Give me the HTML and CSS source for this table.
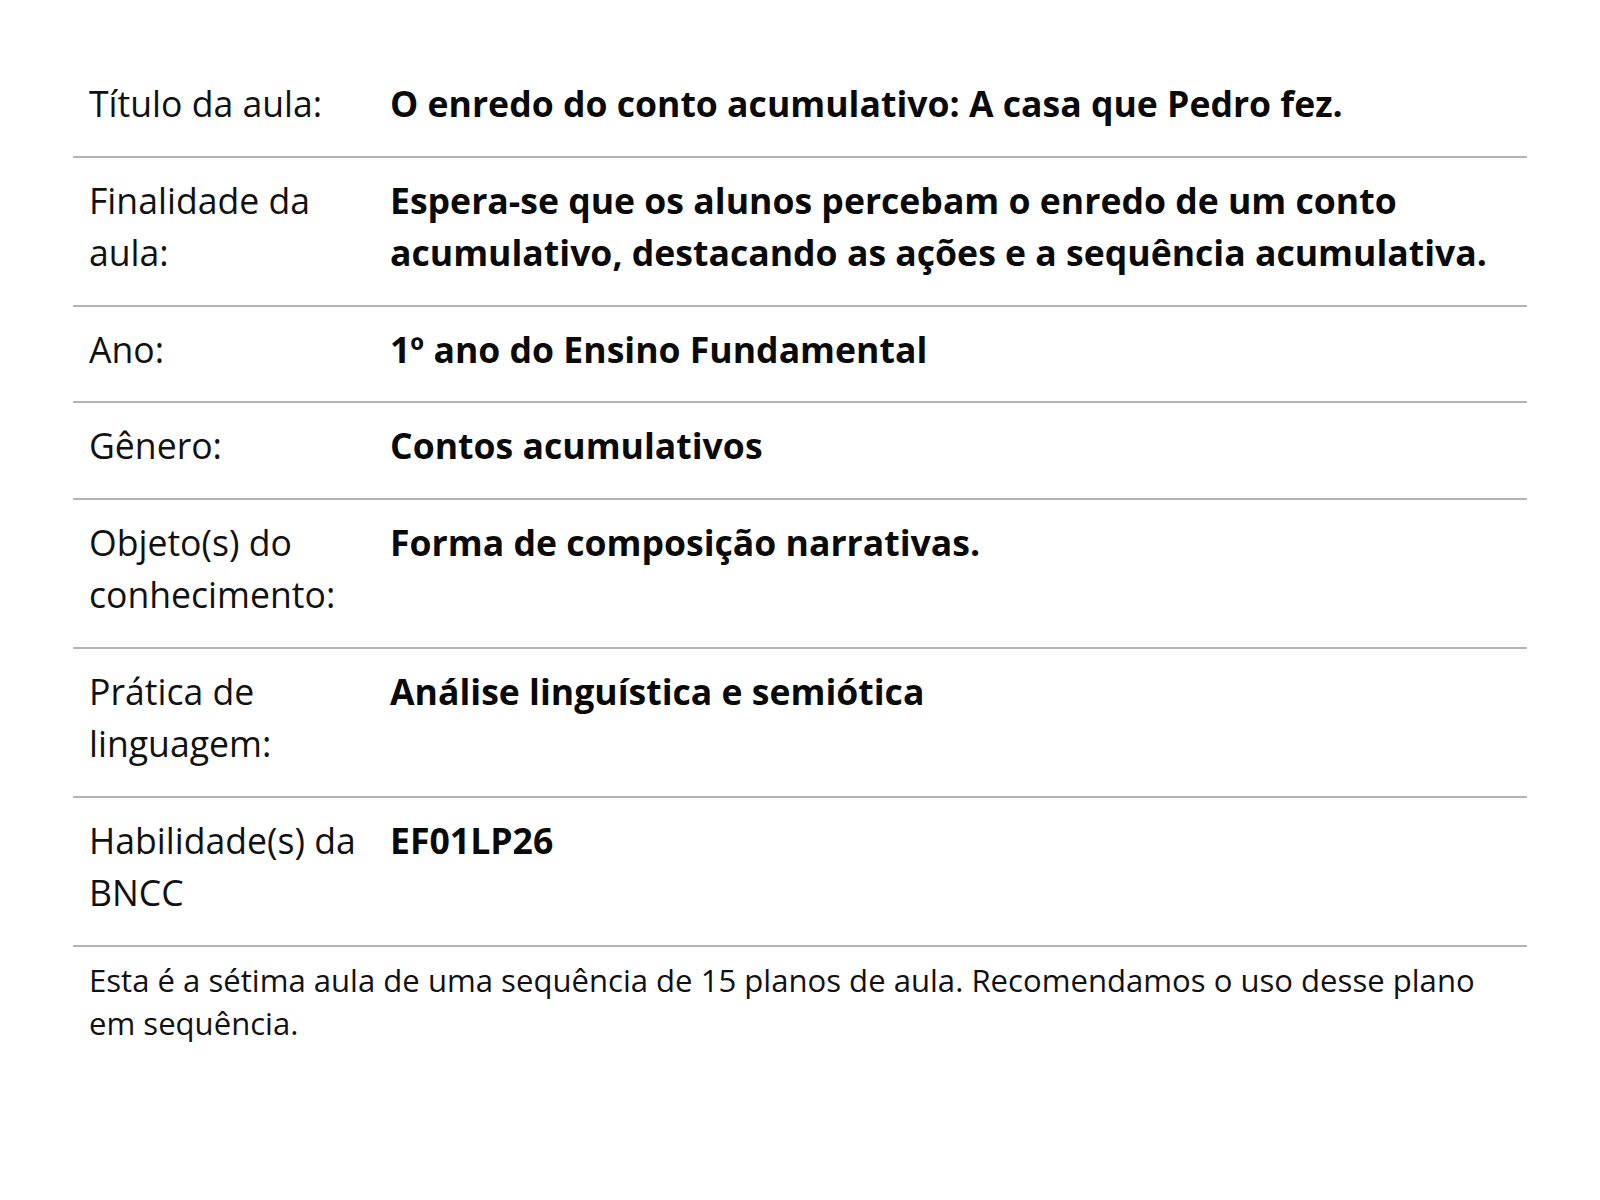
FILE: index.html
```html
<!DOCTYPE html>
<html lang="pt-BR">
<head>
<meta charset="utf-8">
<title>Plano de aula</title>
<link rel="stylesheet" href="styles.css">
</head>
<body>
<div class="plan">
  <div class="row">
    <div class="label">Título da aula:</div>
    <div class="value">O enredo do conto acumulativo: A casa que Pedro fez.</div>
  </div>
  <div class="row">
    <div class="label">Finalidade da aula:</div>
    <div class="value">Espera-se que os alunos percebam o enredo de um conto acumulativo, destacando as ações e a sequência acumulativa.</div>
  </div>
  <div class="row">
    <div class="label">Ano:</div>
    <div class="value">1º ano do Ensino Fundamental</div>
  </div>
  <div class="row">
    <div class="label">Gênero:</div>
    <div class="value">Contos acumulativos</div>
  </div>
  <div class="row">
    <div class="label">Objeto(s) do conhecimento:</div>
    <div class="value">Forma de composição narrativas.</div>
  </div>
  <div class="row">
    <div class="label">Prática de linguagem:</div>
    <div class="value">Análise linguística e semiótica</div>
  </div>
  <div class="row">
    <div class="label">Habilidade(s) da BNCC</div>
    <div class="value">EF01LP26</div>
  </div>
  <p class="note">Esta é a sétima aula de uma sequência de 15 planos de aula. Recomendamos o uso desse plano em sequência.</p>
</div>
</body>
</html>
```

FILE: styles.css
```css
html, body {
  margin: 0;
  padding: 0;
  background: #ffffff;
}

body {
  font-family: "Open Sans", "Noto Sans", sans-serif;
  color: #111111;
}

.plan {
  width: 1454px;
  margin: 61px 0 0 73px;
}

.row {
  display: grid;
  grid-template-columns: 301px 1fr;
  border-bottom: 2px solid #b4b4b4;
  padding: 16px 0 26.8px;
  font-size: 35.6px;
  line-height: 52px;
}

.label {
  padding-left: 16px;
  padding-right: 10px;
  font-weight: 400;
}

.value {
  padding-left: 16px;
  font-weight: 700;
  color: #0a0a0a;
}

.note {
  margin: 0;
  padding: 12px 16px 0;
  font-size: 31.1px;
  line-height: 43px;
}
```
